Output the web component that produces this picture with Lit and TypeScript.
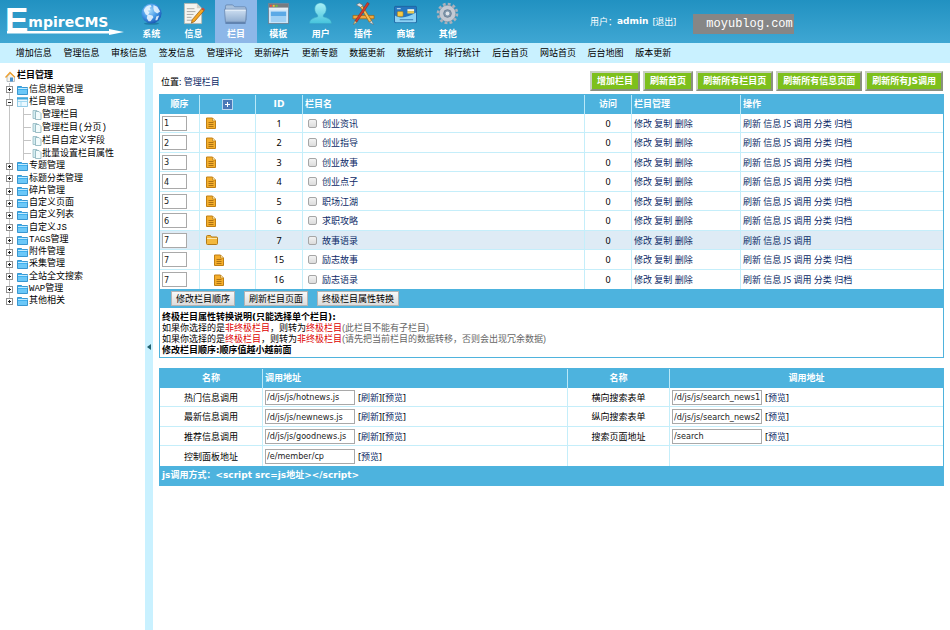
import { LitElement, html, css, svg, nothing, TemplateResult } from "lit";
import { customElement } from "lit/decorators.js";
import { classMap } from "lit/directives/class-map.js";

const globe = svg`
  <defs>
    <radialGradient id="gl" cx="40%" cy="35%" r="65%"><stop offset="0" stop-color="#a9dcfd"/><stop offset=".6" stop-color="#4498e6"/><stop offset="1" stop-color="#1c5cb8"/></radialGradient>
  </defs>
  <ellipse cx="12" cy="22.500" rx="8" ry="1.300" fill="#14688f" opacity=".6"/>
  <circle cx="12" cy="12" r="10.500" fill="url(#gl)"/>
  <path d="M4 9c0-3 4-6 7-6l1 2-2 1 1 2-3 1 2 2-2 3-2-1zM14 3l4 2 3 5-3 2-3-2-1-3zM8 13l5 1 1 2-3 4-2 0-2-3zM17 15l3-1-2 5-2 0z" fill="#eef8ff" opacity=".85"/>`;
const note = svg`
  <path d="M2.500 1.500h13l5 5v16h-18z" fill="#f5f4ef" stroke="#b9b6aa" stroke-width=".8"/>
  <path d="M15.500 1.500v5h5" fill="#d4d1c6"/>
  <path d="M5 7h8M5 10h9M5 13h7M5 16h5M5 19h6" stroke="#a8a8a4" stroke-width="1"/>
  <path d="M20.500 7l2.500 2L13 20.500l-3.200 1.500 .8-3.500z" fill="#f5a623" stroke="#8a5410" stroke-width=".7"/>
  <path d="M20.500 7l1.200-1.300 2.300 2L23 9z" fill="#d2463a"/>`;
const folderBig = svg`
  <defs><linearGradient id="fb" x1="0" y1="0" x2="0" y2="1"><stop offset="0" stop-color="#cfe0f2"/><stop offset="1" stop-color="#8fadd0"/></linearGradient></defs>
  <path d="M1.500 4.500q0-1.500 1.500-1.500h6l2 2h10.500q1.500 0 1.500 1.500V19h-21.500z" fill="#a9c2de" stroke="#5f7da4" stroke-width=".7"/>
  <path d="M.5 7.500h23l-1 13.500h-21z" fill="url(#fb)" stroke="#6a88b0" stroke-width=".8"/>
  <path d="M1.500 8.500h21" stroke="#eef6fd"/>
  <path d="M1.500 22h21" stroke="#3f5c88"/>`;
const windowBig = svg`
  <rect x="1.500" y="1.500" width="21" height="21" fill="#cfe6f8" stroke="#6a8498"/>
  <rect x="2" y="2" width="20" height="4" fill="#777b7f"/>
  <path d="M3 4h2" stroke="#f04d3a" stroke-width="2"/><path d="M6 4h2" stroke="#f8c230" stroke-width="2"/><path d="M9 4h2" stroke="#6cc63c" stroke-width="2"/>
  <rect x="2" y="6" width="20" height="2" fill="#e9eef2"/>
  <rect x="4" y="10" width="16" height="5" fill="#5ba9e6"/><rect x="4" y="15" width="16" height="6" fill="#9fd0f4"/>`;
const person = svg`
  <defs><linearGradient id="pe" x1="0" y1="0" x2="0" y2="1"><stop offset="0" stop-color="#a8f0f6"/><stop offset="1" stop-color="#45c3dc"/></linearGradient></defs>
  <path d="M.5 22.500c0-4 3-5.500 8.500-7v-2c-2-1.500-3-3.500-3-6.500C6 3.500 8.500 1 12 1s6 2.500 6 6c0 3-1 5-3 6.500v2c5.500 1.500 8.500 3 8.500 7z" fill="url(#pe)" stroke="#3aa5c4" stroke-width=".6"/>`;
const tools = svg`
  <path d="M1 14h22v3.500H1z" fill="#f0a73c" stroke="#99600f" stroke-width=".7"/>
  <path d="M8 4l2-1.500 10.500 17-2.500 1.500z" fill="#f5bd55" stroke="#99600f" stroke-width=".7"/>
  <path d="M4.500 3l3-2 4 2.500-2.500 2z" fill="#dfe3e6" stroke="#666" stroke-width=".6"/>
  <path d="M18 21l2.500-1.500 2 4z" fill="#e5e5e5" stroke="#666" stroke-width=".5"/>
  <path d="M16 .5l2 1.200L5 21l-2-1.200z" fill="#d23c2c" stroke="#7f2318" stroke-width=".5"/>
  <path d="M3 19.800L5 21l-3.500 2.500z" fill="#f6d9a0" stroke="#8a5410" stroke-width=".4"/>`;
const card = svg`
  <rect x=".5" y="4.500" width="23" height="17" rx="1" fill="#2576bf" stroke="#1c5a94" stroke-width=".7"/>
  <path d="M1 14c6 4 14 2 22-3v9q0 1-1 1H2q-1 0-1-1z" fill="#8cd2f5"/>
  <rect x="14" y="7.500" width="7" height="2" fill="#f5f5e4"/><rect x="14" y="9.500" width="7" height="2.500" fill="#f0ca4c"/>
  <rect x="3.500" y="10" width="6" height="5" rx="1" fill="#f6c844" stroke="#9e7414" stroke-width=".5"/>
  <path d="M3 7h4" stroke="#cfe8fa"/><path d="M6 18.500h14" stroke="#1e66a4" stroke-width=".8"/>`;
const gear = svg`
  <circle cx="12" cy="12" r="9.800" fill="none" stroke="#aab1bc" stroke-width="3" stroke-dasharray="2.900 2.230"/>
  <circle cx="12" cy="12" r="6.300" fill="none" stroke="#c3c9d3" stroke-width="4.600"/>
  <circle cx="12" cy="12" r="8.600" fill="none" stroke="#828a98" stroke-width=".5"/>
  <circle cx="12" cy="12" r="4" fill="#7f97ad" stroke="#707888" stroke-width=".7"/>
  <circle cx="12" cy="12" r="2" fill="#dfe4ea"/>`;

const NAV: [string, unknown][] = [
  ["系统", globe], ["信息", note], ["栏目", folderBig], ["模板", windowBig],
  ["用户", person], ["插件", tools], ["商城", card], ["其他", gear],
];
const SUBNAV = ["增加信息", "管理信息", "审核信息", "签发信息", "管理评论", "更新碎片", "更新专题",
  "数据更新", "数据统计", "排行统计", "后台首页", "网站首页", "后台地图", "版本更新"];

interface TreeItem { label: string; children?: string[] }
const TREE: TreeItem[] = [
  { label: "信息相关管理" },
  { label: "栏目管理", children: ["管理栏目", "管理栏目(分页)", "栏目自定义字段", "批量设置栏目属性"] },
  ...["专题管理", "标题分类管理", "碎片管理", "自定义页面", "自定义列表", "自定义JS", "TAGS管理",
    "附件管理", "采集管理", "全站全文搜索", "WAP管理", "其他相关"].map((label) => ({ label })),
];

interface Column { order: number; id: number; name: string; kind: "leaf" | "parent" | "child" }
const COLUMNS: Column[] = [
  { order: 1, id: 1, name: "创业资讯", kind: "leaf" },
  { order: 2, id: 2, name: "创业指导", kind: "leaf" },
  { order: 3, id: 3, name: "创业故事", kind: "leaf" },
  { order: 4, id: 4, name: "创业点子", kind: "leaf" },
  { order: 5, id: 5, name: "职场江湖", kind: "leaf" },
  { order: 6, id: 6, name: "求职攻略", kind: "leaf" },
  { order: 7, id: 7, name: "故事语录", kind: "parent" },
  { order: 7, id: 15, name: "励志故事", kind: "child" },
  { order: 7, id: 16, name: "励志语录", kind: "child" },
];

interface Call { name: string; url: string; links: string[] }
const CALLS: [Call, Call | null][] = [
  [{ name: "热门信息调用", url: "/d/js/js/hotnews.js", links: ["刷新", "预览"] },
   { name: "横向搜索表单", url: "/d/js/js/search_news1.js", links: ["预览"] }],
  [{ name: "最新信息调用", url: "/d/js/js/newnews.js", links: ["刷新", "预览"] },
   { name: "纵向搜索表单", url: "/d/js/js/search_news2.js", links: ["预览"] }],
  [{ name: "推荐信息调用", url: "/d/js/js/goodnews.js", links: ["刷新", "预览"] },
   { name: "搜索页面地址", url: "/search", links: ["预览"] }],
  [{ name: "控制面板地址", url: "/e/member/cp", links: ["预览"] }, null],
];

const docIcon = html`<svg class="row-icon" viewBox="0 0 10 12" width="10" height="12" aria-hidden="true">
  <path d="M.5 1h6l3 3v7.500h-9z" fill="#f4ae2c" stroke="#c07f14"/>
  <path d="M6.500 1v3h3" fill="#fde3a0" stroke="#b0700c" stroke-width=".6"/>
  <path d="M2.500 5.500h5M2.500 7.500h5M2.500 9.500h5" stroke="#9c620c" stroke-width=".8"/></svg>`;
const folderIcon = html`<svg class="row-icon" viewBox="0 0 12 10" width="12" height="10" aria-hidden="true">
  <path d="M.5 1.500q0-1 1-1h3l1 1.500h5q1 0 1 1v5.500q0 1-1 1h-9q-1 0-1-1z" fill="#f3b83e" stroke="#b47a17"/>
  <path d="M1 3.500h10" stroke="#fde6a8"/></svg>`;
const toggleIcon = (open: boolean) => html`<svg viewBox="0 0 9 9" width="9" height="9" aria-hidden="true">
  <rect x="1.500" y="1.500" width="6" height="6" fill="#fff" stroke="#8f8f8f"/>
  <path d=${open ? "M3 4.500h3" : "M3 4.500h3M4.500 3v3"} stroke="#222"/></svg>`;
const blueFolder = html`<svg class="folder" viewBox="0 0 11 10" width="11" height="10" aria-hidden="true">
  <path d="M.5 1.500h4l1 1h5v7h-10z" fill="#3fb0ee" stroke="#1f86c8" stroke-width=".8"/>
  <path d="M1 3.500h9.500" stroke="#c5ecff"/><path d="M1 5h9v4H1z" fill="#6cc8f8"/></svg>`;
const openFolder = html`<svg class="folder" viewBox="0 0 11 10" width="11" height="10" aria-hidden="true">
  <rect x=".5" y=".5" width="10" height="9" fill="#eaf8ff" stroke="#7cbfe0" stroke-width=".8"/>
  <path d="M0 1.500h11" stroke="#3fa6dc" stroke-width="2"/><path d="M0 4.500h11M4 5v5" stroke="#8fcfec" stroke-width=".8"/></svg>`;
const pageIcon = html`<svg viewBox="0 0 10 10" width="10" height="10" aria-hidden="true">
  <path d="M1 .5h4v8H1z" fill="#d4ecf1" stroke="#93b9c2" stroke-width=".8"/>
  <path d="M3.500 1.500h3.500l2 2v6h-5.500z" fill="#f2fbfc" stroke="#86aeb9" stroke-width=".8"/></svg>`;
const homeIcon = html`<svg viewBox="0 0 11 11" width="11" height="11" aria-hidden="true">
  <path d="M2 5.500v5h7.500v-5L6 2z" fill="#f6f3ea" stroke="#9ba6b0" stroke-width=".7"/>
  <path d="M0 6l5-5.500 5.500 5.500-1 .8L5 2.500 1 7z" fill="#f0a02c"/>
  <rect x="5" y="6.500" width="3" height="4" fill="#4a93d0"/></svg>`;

@customElement("app-root")
export class AppRoot extends LitElement {
  static styles = css`
    :host {
      display: flex;
      flex-direction: column;
      min-height: 100vh;
      background: #fff;
      color: #000;
      font: 9px/11px "Noto Sans", "Noto Sans CJK SC", sans-serif;
    }
    * { box-sizing: border-box; }
    a { color: inherit; text-decoration: none; }
    ul { list-style: none; margin: 0; padding: 0; }
    svg { display: block; flex: none; }
    input { font: inherit; }
    b, th, tfoot td { font-family: "DejaVu Sans", "Noto Sans CJK SC", sans-serif; font-weight: bold; }

    .banner {
      display: flex;
      height: 43px;
      background: linear-gradient(#2191c1, #3fa7d3);
      color: #fff;
    }
    .logo { position: relative; width: 130px; padding-left: 5px; display: flex; align-items: flex-start; }
    .logo-e { font: bold 35px/40px "Liberation Sans", sans-serif; }
    .logo-rest { font: bold 14px/20px "DejaVu Sans", sans-serif; padding-top: 12px; }
    .logo-arrow { position: absolute; left: 7px; top: 29px; }
    .nav { display: grid; grid-template-columns: repeat(8, 1fr); width: 339px; }
    .nav a {
      display: flex;
      flex-direction: column;
      align-items: center;
      gap: 2px;
      padding-top: 2px;
      font-weight: bold;
      line-height: 14px;
    }
    .nav a.current { background: #8db7e8; }
    .user { display: flex; align-items: center; gap: 4px; margin-left: 121px; height: 43px; }
    .who { display: flex; }
    .site {
      align-self: flex-start;
      margin: 14px 0 0 17px;
      padding-left: 13px;
      width: 101px;
      background: #868686;
      font: 12px/20px "Liberation Mono", monospace;
      white-space: nowrap;
    }
    .subnav { background: #c9f1ff; height: 20px; padding-left: 10px; }
    .subnav ul { display: grid; grid-template-columns: repeat(14, 1fr); width: 667px; text-align: center; line-height: 20px; }

    .body { flex: 1; display: flex; }
    .side { width: 145px; padding: 7px 0 0 5px; font-family: "Liberation Mono", "Noto Sans CJK SC", monospace; }
    .side h2 { display: flex; align-items: center; gap: 1px; margin: 0; height: 13px; font-size: 9px; }
    .side li {
      background: linear-gradient(#c4c4c4, #c4c4c4) 4px 0 / 1px 100% no-repeat;
    }
    .side .tree > li:last-child { background-size: 1px 50%; }
    .side .tree > li:nth-child(4n) > .node { height: 13px; }
    .node { display: flex; align-items: center; height: 12px; line-height: 12px; white-space: nowrap; }
    .side .tree > li:first-child > .node { height: 13px; }
    .node .folder { margin: 0 1px 0 3px; }
    .side .kids { padding-left: 14px; }
    .side .kids .node { height: 13px; }
    .kids .node::before { content: ""; width: 7px; height: 1px; background: #c4c4c4; margin: 0 1px 0 5px; }
    .split {
      width: 8px;
      flex: none;
      padding: 0;
      border: 0;
      background: #c9f1ff;
      display: flex;
      align-items: center;
      justify-content: center;
    }
    .main { flex: 1; min-width: 0; padding: 0 6px 12px; }
    .bar { display: flex; align-items: center; padding: 8px 1px 3px 2px; }
    .bar p { margin: 0; flex: 1; }
    .tools { display: flex; gap: 3px; }
    .tools button {
      height: 20px;
      padding: 0 5px;
      border: 2px solid;
      border-color: #c8d0c0 #8a9080 #8a9080 #c8d0c0;
      background: #7dc01c;
      color: #fff;
      font: bold 9px/14px "DejaVu Sans", "Noto Sans CJK SC", sans-serif;
    }
    a { color: #0b2a66; }
    .banner a { color: #fff; }
    .subnav a, .side a { color: #000; }

    .panel { border: 1px solid #4fb3dd; margin-bottom: 10px; }
    table { width: 100%; border-collapse: separate; border-spacing: 0; table-layout: fixed; }
    th, td { padding: 0 2px; vertical-align: middle; }
    thead tr { height: 19px; }
    th { background: #4db3de; color: #fff; border-left: 1px solid #b9e8f8; text-align: center; }
    th:first-child, td:first-child { border-left: 0; }
    th.left { text-align: left; }
    tbody tr { height: 19px; }
    tbody tr:nth-child(even) { height: 20px; }
    tbody td { border-left: 1px solid #c5eefa; border-bottom: 1px solid #c5eefa; text-align: center; }
    tbody td.left { text-align: left; }
    tbody tr:last-child td { border-bottom: 0; }
    tr.parent td { background: #deebf5; }
    .c-order { width: 39px; } .c-icon { width: 56px; } .c-id { width: 47px; }
    .c-hits { width: 47px; } .c-manage { width: 109px; } .c-act { width: 203px; }
    .c-name { width: 102px; } .c-right { width: 274px; }
    .order, .url {
      display: block;
      height: 15px;
      padding: 0 1px;
      border: 1px solid #a9a9a9;
      background: #fff;
      color: #222;
      font: 9px/13px "DejaVu Sans Condensed", "DejaVu Sans", sans-serif;
    }
    .order { width: 25px; }
    .url { width: 90px; }
    .row-icon { margin-left: 4px; }
    .child .row-icon { margin-left: 12px; }
    .plus { display: block; margin: 0 auto; padding: 0; border: 0; background: none; }
    .name { display: flex; align-items: center; gap: 5px; padding-left: 3px; color: #0b2a66; }
    .name input {
      appearance: none;
      width: 9px;
      height: 9px;
      margin: 0;
      border: 1px solid #a6a6a6;
      border-radius: 2px;
      background: linear-gradient(#f2f2f2, #dcdcdc);
    }
    .call { display: flex; align-items: center; gap: 3px; }
    tfoot td { height: 19px; background: #4db3de; color: #fff; }
    .batch { display: flex; gap: 9px; padding-left: 9px; }
    .batch button {
      height: 15px;
      padding: 0 4px;
      border: 1px solid #b4b4b4;
      background: linear-gradient(#f8f8f8, #dcdcdc);
      color: #000;
      font: 9px/12px "Noto Sans", "Noto Sans CJK SC", sans-serif;
    }
    .notes { padding: 4px 2px 1px; font-family: "Liberation Sans", "Noto Sans CJK SC", sans-serif; }
    .notes p { margin: 0; }
    .notes em { font-style: normal; color: #d00; }
    .notes small { font-size: 9px; color: #666; }
  `;

  private tree(): TemplateResult {
    return html`<ul class="tree">
      ${TREE.map((t) => html`<li>
        <a class="node" href="#">${toggleIcon(!!t.children)}${t.children ? openFolder : blueFolder}${t.label}</a>
        ${t.children
          ? html`<ul class="kids">${t.children.map((c) => html`<li><a class="node" href="#">${pageIcon}${c}</a></li>`)}</ul>`
          : nothing}
      </li>`)}
    </ul>`;
  }

  private links(labels: string[]) {
    return labels.map((l) => html`<a href="#">${l}</a> `);
  }

  private columnRow(c: Column): TemplateResult {
    const actions = c.kind === "parent" ? ["刷新", "信息", "JS", "调用"] : ["刷新", "信息", "JS", "调用", "分类", "归档"];
    return html`<tr class=${classMap({ [c.kind]: true })}>
      <td><input class="order" type="text" aria-label="顺序" .value=${String(c.order)}></td>
      <td>${c.kind === "parent" ? folderIcon : docIcon}</td>
      <td>${c.id}</td>
      <td><label class="name"><input type="checkbox"><span>${c.name}</span></label></td>
      <td>0</td>
      <td class="left">${this.links(["修改", "复制", "删除"])}</td>
      <td class="left">${this.links(actions)}</td>
    </tr>`;
  }

  private callCells(c: Call | null): TemplateResult {
    if (!c) return html`<td></td><td></td>`;
    return html`<td>${c.name}</td>
      <td><div class="call"><input class="url" type="text" aria-label=${c.name} .value=${c.url}>
        <span>${c.links.map((l) => html`[<a href="#">${l}</a>]`)}</span></div></td>`;
  }

  render() {
    return html`
      <header class="banner">
        <div class="logo">
          <svg class="logo-arrow" viewBox="0 0 117 7" width="117" height="7" aria-hidden="true">
            <path d="M0 2h102V0l15 3-15 3V4.500H0z" fill="#fff"/></svg>
          <span class="logo-e">E</span><span class="logo-rest">mpireCMS</span>
        </div>
        <nav class="nav">
          ${NAV.map(([label, icon]) => html`<a href="#" class=${classMap({ current: label === "栏目" })}>
            <svg viewBox="0 0 24 24" width="23" height="23" aria-hidden="true">${icon}</svg>${label}</a>`)}
        </nav>
        <div class="user"><span class="who">用户：<b>admin</b></span><a href="#">[退出]</a></div>
        <div class="site">moyublog.com</div>
      </header>
      <nav class="subnav"><ul>${SUBNAV.map((s) => html`<li><a href="#">${s}</a></li>`)}</ul></nav>
      <div class="body">
        <aside class="side"><h2>${homeIcon}栏目管理</h2>${this.tree()}</aside>
        <button class="split" aria-label="收起">
          <svg viewBox="0 0 4 6" width="4" height="6" aria-hidden="true"><path d="M4 0v6L0 3z" fill="#23606f"/></svg>
        </button>
        <main class="main">
          <div class="bar">
            <p>位置: <a href="#">管理栏目</a></p>
            <div class="tools">
              ${["增加栏目", "刷新首页", "刷新所有栏目页", "刷新所有信息页面", "刷新所有JS调用"].map((b) => html`<button>${b}</button>`)}
            </div>
          </div>
          <div class="panel">
            <table>
              <thead><tr>
                <th class="c-order">顺序</th>
                <th class="c-icon"><button class="plus" aria-label="展开">
                  <svg viewBox="0 0 11 11" width="11" height="11" aria-hidden="true">
                    <rect x=".5" y=".5" width="10" height="10" fill="#4a78b8" stroke="#b8d8f0"/>
                    <path d="M3 5.500h5M5.500 3v5" stroke="#fff"/></svg></button></th>
                <th class="c-id">ID</th>
                <th class="left">栏目名</th>
                <th class="c-hits">访问</th>
                <th class="c-manage left">栏目管理</th>
                <th class="c-act left">操作</th>
              </tr></thead>
              <tbody>${COLUMNS.map((c) => this.columnRow(c))}</tbody>
              <tfoot><tr><td colspan="7"><div class="batch">
                <button>修改栏目顺序</button><button>刷新栏目页面</button><button>终极栏目属性转换</button>
              </div></td></tr></tfoot>
            </table>
            <div class="notes">
              <p><b>终极栏目属性转换说明(只能选择单个栏目):</b></p>
              <p>如果你选择的是<em>非终极栏目</em>，则转为<em>终极栏目</em><small>(此栏目不能有子栏目)</small></p>
              <p>如果你选择的是<em>终极栏目</em>，则转为<em>非终极栏目</em><small>(请先把当前栏目的数据转移，否则会出现冗余数据)</small></p>
              <p><b>修改栏目顺序:顺序值越小越前面</b></p>
            </div>
          </div>
          <div class="panel">
            <table>
              <thead><tr>
                <th class="c-name">名称</th><th class="left">调用地址</th>
                <th class="c-name">名称</th><th class="c-right">调用地址</th>
              </tr></thead>
              <tbody>${CALLS.map(([a, b]) => html`<tr>${this.callCells(a)}${this.callCells(b)}</tr>`)}</tbody>
              <tfoot><tr><td colspan="4">js调用方式：&lt;script src=js地址&gt;&lt;/script&gt;</td></tr></tfoot>
            </table>
          </div>
        </main>
      </div>
    `;
  }
}
